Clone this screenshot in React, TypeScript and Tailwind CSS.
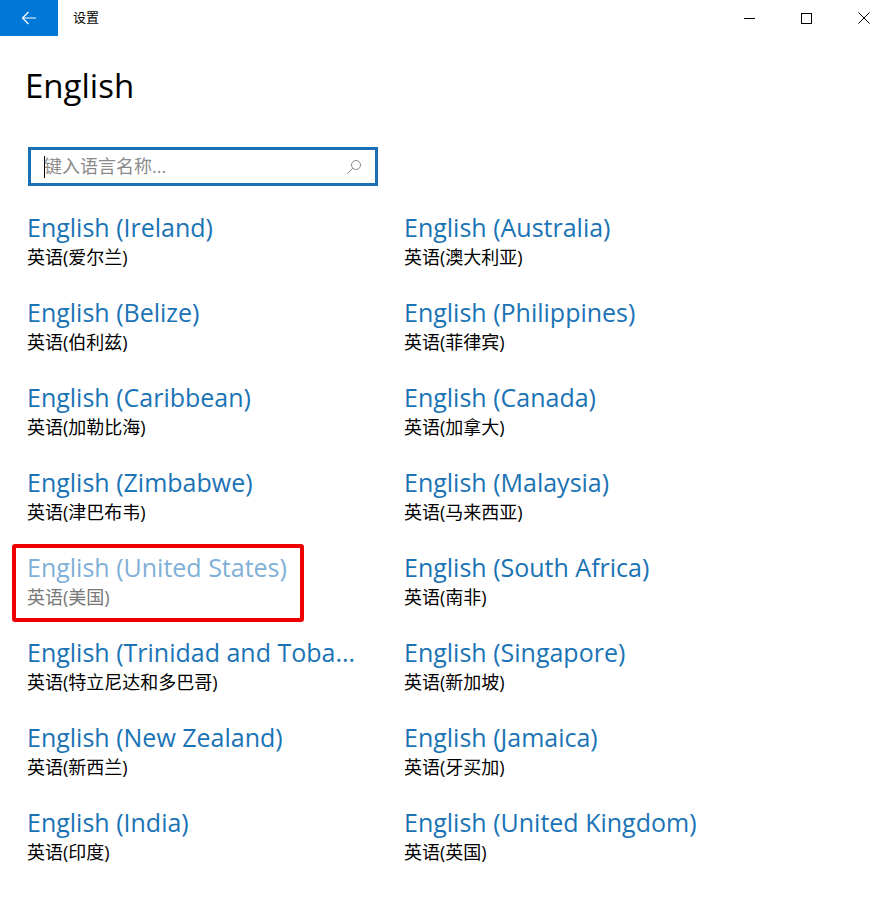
const langs: [string, string][] = [
  ["English (Ireland)", "英语(爱尔兰)"],
  ["English (Australia)", "英语(澳大利亚)"],
  ["English (Belize)", "英语(伯利兹)"],
  ["English (Philippines)", "英语(菲律宾)"],
  ["English (Caribbean)", "英语(加勒比海)"],
  ["English (Canada)", "英语(加拿大)"],
  ["English (Zimbabwe)", "英语(津巴布韦)"],
  ["English (Malaysia)", "英语(马来西亚)"],
  ["English (United States)", "英语(美国)"],
  ["English (South Africa)", "英语(南非)"],
  ["English (Trinidad and Toba...", "英语(特立尼达和多巴哥)"],
  ["English (Singapore)", "英语(新加坡)"],
  ["English (New Zealand)", "英语(新西兰)"],
  ["English (Jamaica)", "英语(牙买加)"],
  ["English (India)", "英语(印度)"],
  ["English (United Kingdom)", "英语(英国)"],
];

const font = { fontFamily: '"Open Sans", "Noto Sans CJK SC", sans-serif' };

const App = () => {
  return (
    <div className="w-[892px] h-[898px] bg-white text-black" style={font}>
      {/* title bar */}
      <div className="flex items-center h-9">
        <div className="w-[58px] h-9 bg-[#0078d7] flex items-center justify-center">
          <svg width="16" height="14" viewBox="0 0 16 14" fill="none" stroke="white" strokeWidth="1.2">
            <path d="M15 7H1.5M7.5 1L1.5 7l6 6" />
          </svg>
        </div>
        <span className="ml-[15px] text-[13px]">设置</span>
        <div className="ml-auto flex items-center h-9">
          <div className="w-[57px] flex justify-center">
            <div className="w-[11px] h-px bg-black" />
          </div>
          <div className="w-[57px] flex justify-center">
            <div className="w-[11px] h-[11px] border border-black" />
          </div>
          <div className="w-[57px] flex justify-center">
            <svg width="12" height="12" viewBox="0 0 12 12" stroke="black" strokeWidth="1">
              <path d="M0.5 0.5l11 11M11.5 0.5l-11 11" />
            </svg>
          </div>
        </div>
      </div>

      <h1 className="ml-[25px] mt-[30px] text-[33px] leading-10">English</h1>

      {/* search */}
      <div className="ml-[28px] mt-[41px] w-[350px] h-[39px] border-[3px] border-[#1b6fb5] flex items-center px-[13px]">
        <div className="w-px h-[22px] bg-black" />
        <span className="text-[18px] text-[#8a8a8a] flex-1 -ml-px">键入语言名称...</span>
        <svg width="16" height="16" viewBox="0 0 16 16" fill="none" stroke="#8a8a8a" strokeWidth="1">
          <circle cx="10" cy="6" r="4.5" />
          <path d="M6.8 9.2L1.5 14.5" />
        </svg>
      </div>

      {/* language grid */}
      <div className="mt-[25px] ml-[27px] grid grid-cols-[377px_1fr] gap-y-[25px]">
        {langs.map(([name, sub]) => {
          const selected = name === "English (United States)";
          return (
            <div key={name} className="relative h-[60px]">
              {selected && (
                <div className="absolute left-[-15px] top-[-7px] w-[292px] h-[78px] border-[4px] border-[#ee0000] rounded-[3px]" />
              )}
              <div
                className={
                  "text-[25px] leading-[32px] whitespace-nowrap " +
                  (selected ? "text-[#7fb0d7]" : "text-[#1a73b5]")
                }
              >
                {name}
              </div>
              <div className={"text-[18px] leading-[28px] " + (selected ? "text-[#777]" : "text-black")}>{sub}</div>
            </div>
          );
        })}
      </div>
    </div>
  );
};

export default App;
